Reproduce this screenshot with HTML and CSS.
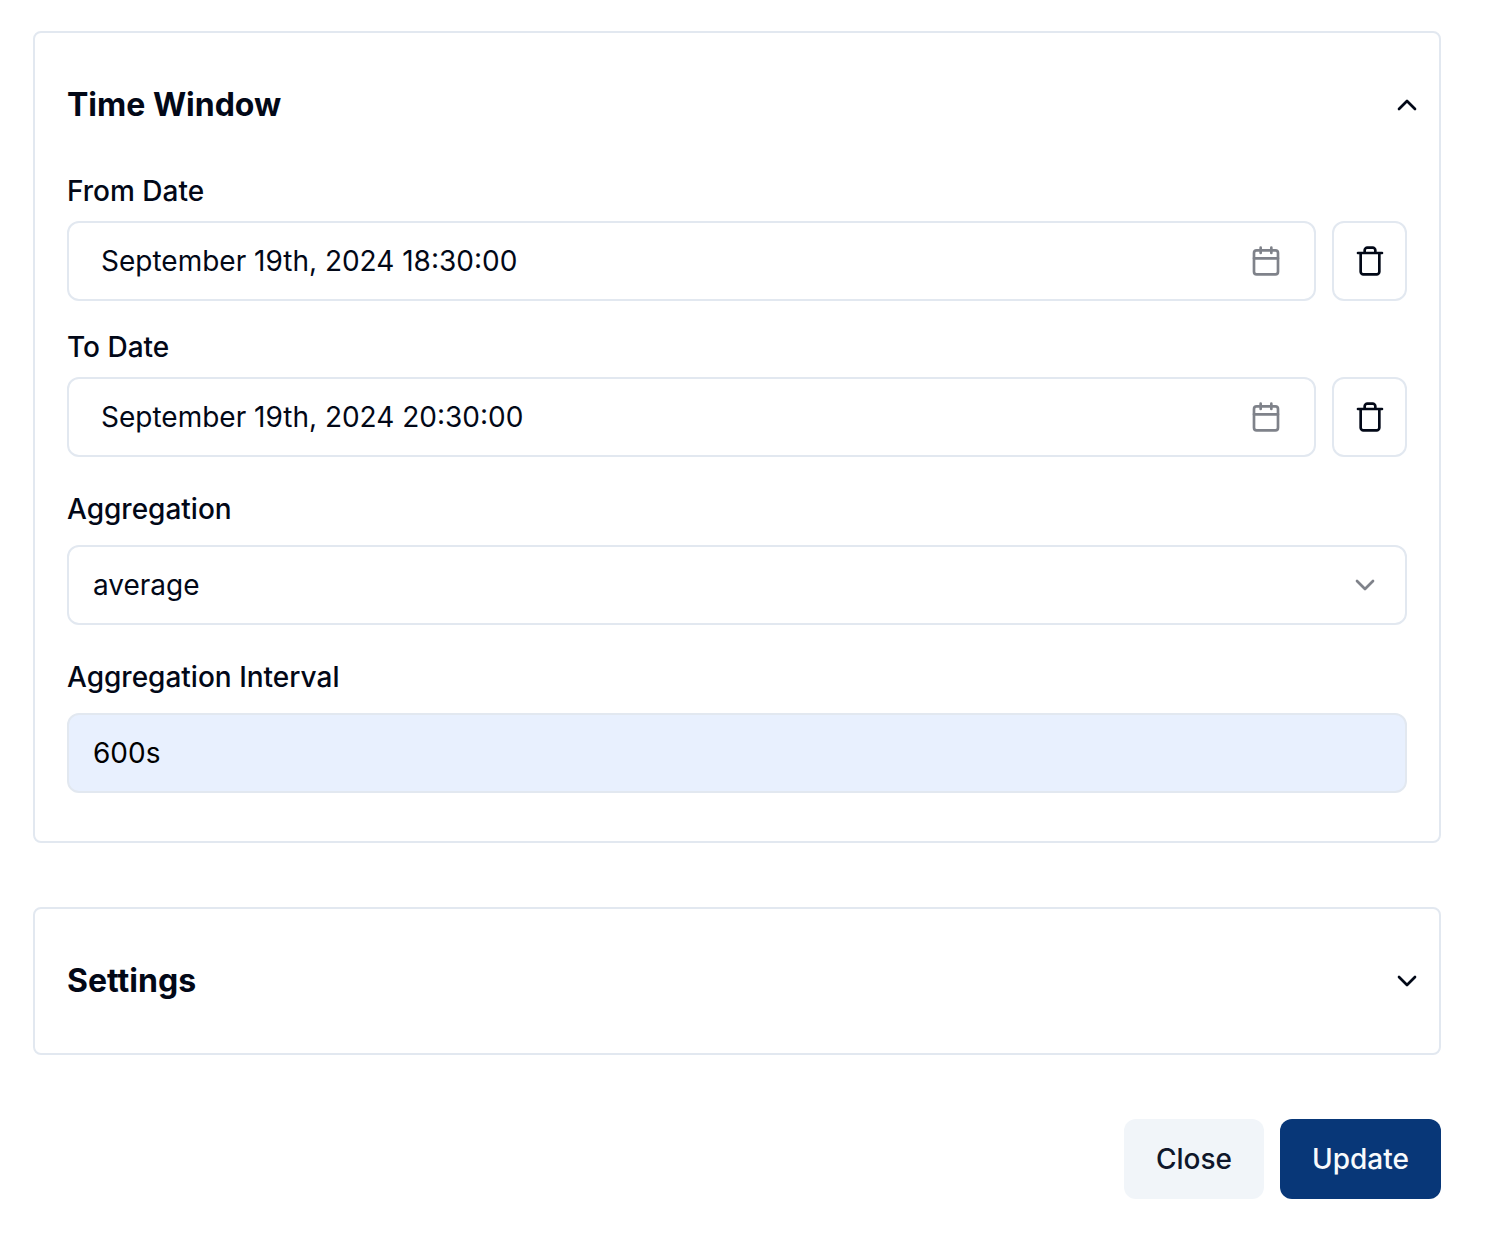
FILE: index.html
```html
<!DOCTYPE html>
<html lang="en">
<head>
<meta charset="utf-8">
<title>Time Window</title>
<link rel="stylesheet" href="styles.css">
</head>
<body>
<svg class="sprite" aria-hidden="true">
  <symbol id="calendar" viewBox="0 0 24 24"><rect x="3" y="4" width="18" height="18" rx="2"/><path d="M16 2v4M8 2v4M3 10h18"/></symbol>
  <symbol id="trash" viewBox="0 0 24 24"><path d="M3 6h18M19 6v14c0 1-1 2-2 2H7c-1 0-2-1-2-2V6M8 6V4c0-1 1-2 2-2h4c1 0 2 1 2 2v2"/></symbol>
  <symbol id="chevron" viewBox="0 0 24 24"><path d="m6 9 6 6 6-6"/></symbol>
</svg>
<main class="page">
  <section class="card">
    <header class="card-header"><h2>Time Window</h2><svg class="icon up"><use href="#chevron"/></svg></header>
    <div class="fields">
      <label class="label">From Date</label>
      <div class="date-row">
        <button class="control date">September 19th, 2024 18:30:00<svg class="icon muted"><use href="#calendar"/></svg></button>
        <button class="control delete" aria-label="Clear from date"><svg class="icon"><use href="#trash"/></svg></button>
      </div>
      <label class="label to">To Date</label>
      <div class="date-row">
        <button class="control date">September 19th, 2024 20:30:00<svg class="icon muted"><use href="#calendar"/></svg></button>
        <button class="control delete" aria-label="Clear to date"><svg class="icon"><use href="#trash"/></svg></button>
      </div>
      <label class="label roomy">Aggregation</label>
      <button class="control select">average<svg class="icon muted"><use href="#chevron"/></svg></button>
      <label class="label roomy">Aggregation Interval</label>
      <div class="control interval">600s</div>
    </div>
  </section>
  <section class="card settings">
    <header class="card-header"><h2>Settings</h2><svg class="icon"><use href="#chevron"/></svg></header>
  </section>
  <footer class="actions"><button class="button close">Close</button><button class="button update">Update</button></footer>
</main>
</body>
</html>
```
FILE: styles.css
```css
* { box-sizing: border-box; }
body { margin: 0; background: #fff; color: #020817; font-family: Inter, "Liberation Sans", sans-serif; font-size: 28px; line-height: 40px; }
button { font: inherit; color: inherit; margin: 0; }
.sprite { display: none; }
.page { width: 1408px; margin: 31px 0 0 33px; }
.card { border: 2px solid #e2e8f0; border-radius: 8px; height: 812px; }
.card-header { height: 144px; padding: 0 16px 0 32px; display: flex; align-items: center; justify-content: space-between; }
h2 { margin: 0; font-size: 32px; font-weight: 700; line-height: 48px; font-variant-ligatures: none; }
.icon { display: block; flex: none; width: 32px; height: 32px; fill: none; stroke: currentColor; stroke-width: 2; stroke-linecap: round; stroke-linejoin: round; }
.up { transform: rotate(180deg); }
.muted { opacity: 0.5; }
.fields { padding: 0 32px; }
.label { display: block; height: 44px; line-height: 28px; font-weight: 500; }
.label.to { margin-top: 32px; }
.label.roomy { height: 50px; margin-top: 38px; }
.control { display: flex; align-items: center; height: 80px; width: 100%; border: 2px solid #e2e8f0; border-radius: 12px; background: #fff; padding: 0 24px; }
.date-row { display: flex; gap: 16px; }
.date { width: 1249px; padding: 0 32px; justify-content: space-between; }
.delete { width: 75px; padding: 0 0 0 1px; justify-content: center; }
.select { justify-content: space-between; }
.interval { background: #e8f0fe; color: #000; }
.settings { height: 148px; margin-top: 64px; }
.actions { display: flex; justify-content: flex-end; gap: 16px; margin-top: 64px; }
.button { height: 80px; border: 0; border-radius: 12px; padding: 0; font-weight: 500; }
.close { width: 140px; background: #f1f5f9; color: #0f172a; }
.update { width: 161px; background: #083778; color: #f8fafc; }
```
